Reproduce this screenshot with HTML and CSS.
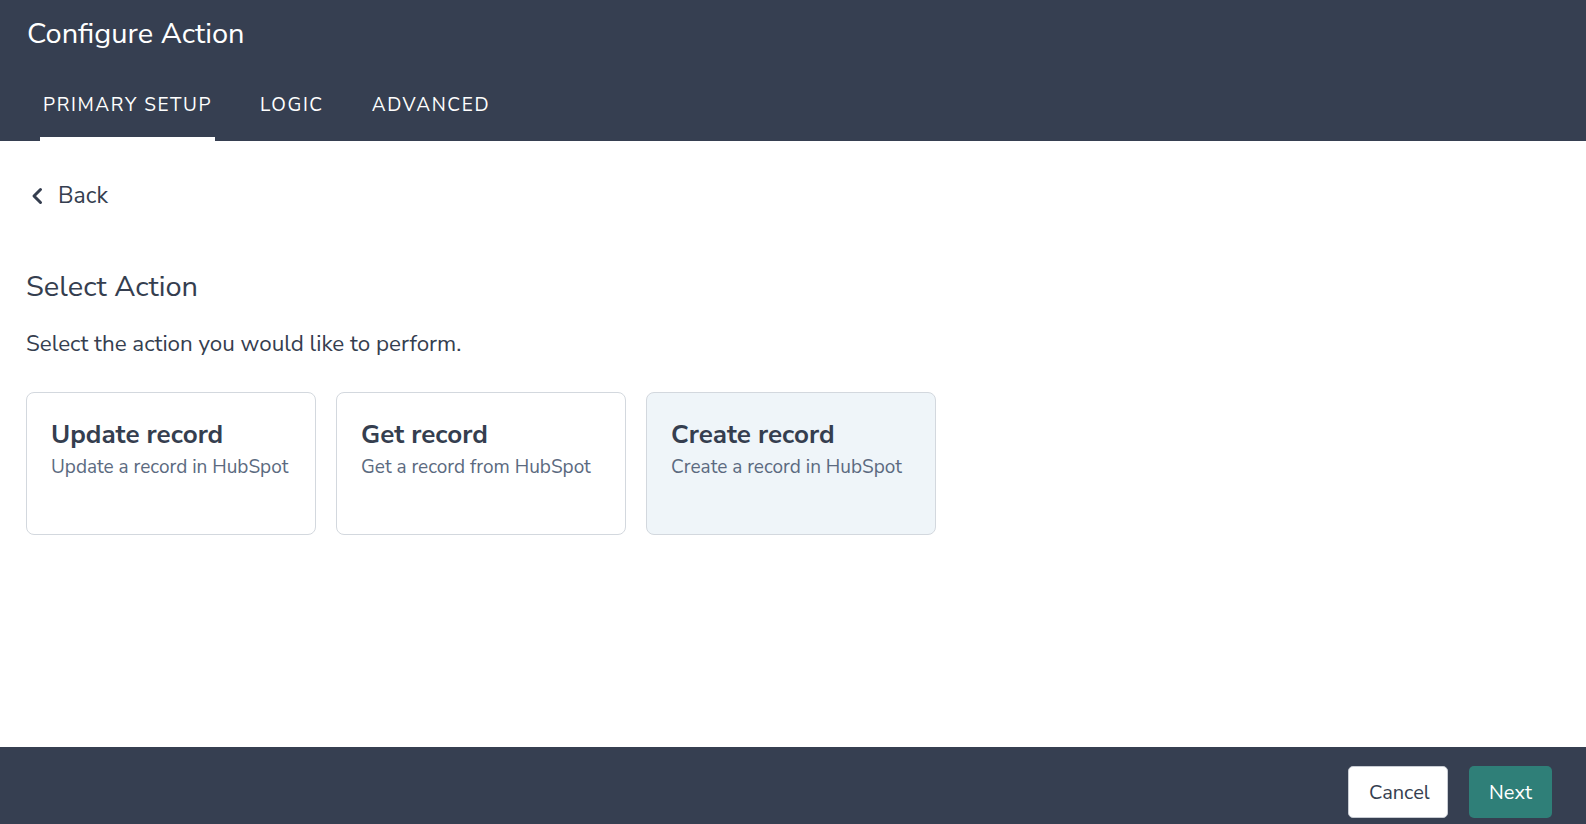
FILE: index.html
```html
<!DOCTYPE html>
<html lang="en">
<head>
    <meta charset="UTF-8">
    <meta name="viewport" content="width=device-width, initial-scale=1.0">
    <title>Configure Action</title>
    <link rel="stylesheet" href="styles.css">
</head>
<body>
    <div class="header">
        <h1 class="title">Configure Action</h1>
        <div class="tabs">
            <div class="tab active">PRIMARY SETUP</div>
            <div class="tab">LOGIC</div>
            <div class="tab">ADVANCED</div>
        </div>
    </div>

    <div class="content">
        <a class="back" href="#">
            <svg width="14" height="18" viewBox="0 0 14 18"><path d="M10.5 2.5 L4 9 L10.5 15.5" fill="none" stroke="#353e4f" stroke-width="3" stroke-linecap="round" stroke-linejoin="round"/></svg>
            <span>Back</span>
        </a>

        <h2 class="section-title">Select Action</h2>
        <p class="section-desc">Select the action you would like to perform.</p>

        <div class="cards">
            <div class="card">
                <div class="card-title">Update record</div>
                <div class="card-sub">Update a record in HubSpot</div>
            </div>
            <div class="card">
                <div class="card-title">Get record</div>
                <div class="card-sub">Get a record from HubSpot</div>
            </div>
            <div class="card selected">
                <div class="card-title">Create record</div>
                <div class="card-sub">Create a record in HubSpot</div>
            </div>
        </div>
    </div>

    <div class="footer">
        <button class="btn btn-cancel">Cancel</button>
        <button class="btn btn-next">Next</button>
    </div>
</body>
</html>
```

FILE: styles.css
```css
body {
    font-family: "Nunito Sans", Lato, "Open Sans", sans-serif;
    margin: 0;
    padding: 0;
    background-color: #fff;
    color: #353e4f;
    height: 824px;
    display: flex;
    flex-direction: column;
    overflow: hidden;
}
.header {
    background-color: #363f51;
    color: #fff;
}
.title {
    margin: 0;
    padding-left: 27px;
    font-size: 29px;
    font-weight: 400;
    line-height: 68px;
}
.tabs {
    display: flex;
    gap: 42px;
    padding-left: 40px;
    height: 73px;
}
.tab {
    display: flex;
    align-items: center;
    padding: 4px 3px 0;
    font-size: 19px;
    letter-spacing: 1.6px;
    border-bottom: 4px solid transparent;
}
.tab.active {
    border-bottom-color: #fff;
}
.content {
    flex: 1;
    padding: 0 26px;
}
.back {
    display: inline-flex;
    align-items: center;
    gap: 14px;
    margin-top: 40px;
    padding-left: 4px;
    color: #353e4f;
    text-decoration: none;
    font-size: 23px;
    line-height: 30px;
}
.section-title {
    margin: 58px 0 0;
    font-size: 29px;
    font-weight: 400;
    line-height: 36px;
}
.section-desc {
    margin: 25px 0 0;
    font-size: 22.4px;
    line-height: 28px;
}
.cards {
    display: flex;
    gap: 20px;
    margin-top: 34px;
}
.card {
    box-sizing: border-box;
    width: 290px;
    height: 143px;
    padding: 25px 24px;
    border: 1px solid #d3d8de;
    border-radius: 8px;
    background-color: #fff;
}
.card.selected {
    background-color: #eff5f9;
}
.card-title {
    font-size: 26px;
    font-weight: 700;
    line-height: 34px;
}
.card-sub {
    margin-top: 2px;
    font-size: 19px;
    line-height: 26px;
    color: #5b6a80;
}
.footer {
    background-color: #363f51;
    height: 77px;
    display: flex;
    justify-content: flex-end;
    align-items: flex-start;
    gap: 21px;
    padding: 19px 34px 0 0;
    box-sizing: border-box;
}
.btn {
    font-family: inherit;
    font-size: 20px;
    height: 52px;
    padding: 0 20px;
    border-radius: 5px;
    border: none;
    cursor: pointer;
}
.btn-cancel {
    background-color: #fff;
    color: #353e4f;
    width: 100px;
    border: 1px solid #c8ccd3;
}
.btn-next {
    background-color: #2f7f78;
    color: #fff;
    width: 83px;
}
```
